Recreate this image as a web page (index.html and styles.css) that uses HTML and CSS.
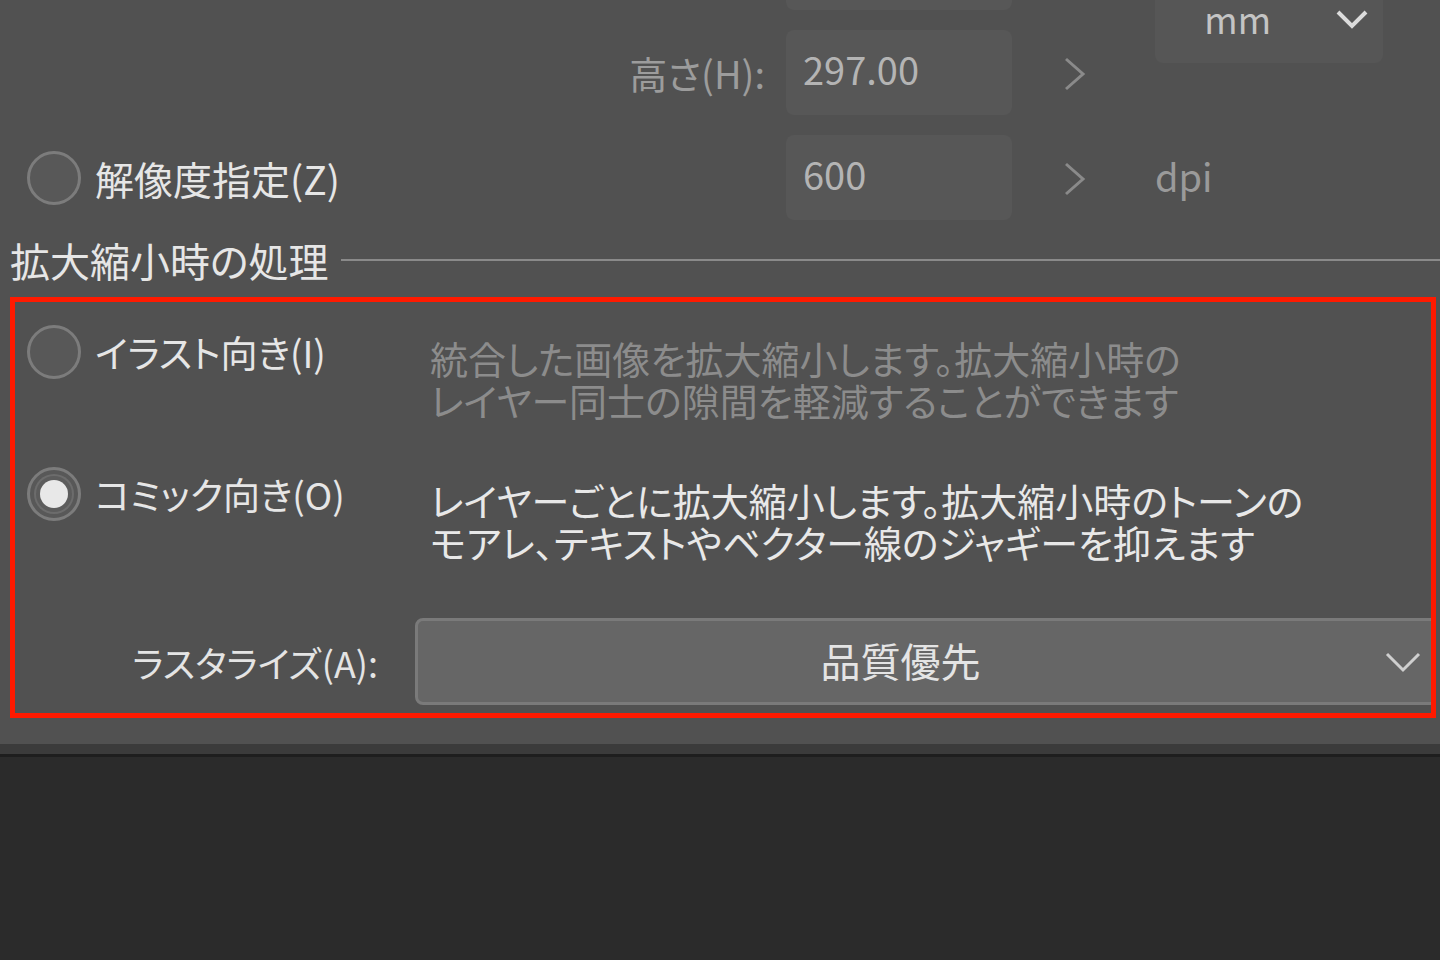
FILE: index.html
```html
<!DOCTYPE html>
<html lang="ja">
  <head>
    <meta charset="UTF-8" />
    <meta name="viewport" content="width=device-width, initial-scale=1.0" />
    <title>画像を統合して書き出し</title>
    <link rel="stylesheet" href="styles.css">
  </head>
  <body>
    <div class="dialog">
      <!-- サイズ指定 -->
      <div class="size-grid">
        <div class="label"></div>
        <div class="field"></div>
        <div class="step"></div>
        <div class="unit-select">
          <span>mm</span>
          <svg class="unit-chevron" width="34" height="22" viewBox="0 0 34 22">
            <polyline points="3,4 17,18 31,4" fill="none" stroke="#dcdcdc" stroke-width="4" />
          </svg>
        </div>

        <div class="label">高さ(H):</div>
        <div class="field">297.00</div>
        <div class="step">
          <svg width="24" height="34" viewBox="0 0 24 34">
            <polyline points="3,2 20,17 3,32" fill="none" stroke="#8a8a8a" stroke-width="3" />
          </svg>
        </div>

        <div class="radio-label">
          <span class="radio"></span>
          <span>解像度指定(Z)</span>
        </div>
        <div class="field">600</div>
        <div class="step">
          <svg width="24" height="34" viewBox="0 0 24 34">
            <polyline points="3,2 20,17 3,32" fill="none" stroke="#8a8a8a" stroke-width="3" />
          </svg>
        </div>
        <div class="unit-text">dpi</div>
      </div>

      <!-- 拡大縮小時の処理 -->
      <div class="section-head">
        <span>拡大縮小時の処理</span>
        <div class="section-line"></div>
      </div>

      <div class="highlight">
        <div class="option">
          <div class="radio-label">
            <span class="radio"></span>
            <span>イラスト向き(I)</span>
          </div>
          <p class="desc disabled">統合した画像を拡大縮小します。拡大縮小時の<br>レイヤー同士の隙間を軽減することができます</p>
        </div>
        <div class="option">
          <div class="radio-label">
            <span class="radio checked"></span>
            <span>コミック向き(O)</span>
          </div>
          <p class="desc">レイヤーごとに拡大縮小します。拡大縮小時のトーンの<br>モアレ、テキストやベクター線のジャギーを抑えます</p>
        </div>
        <div class="raster-row">
          <div class="raster-label">ラスタライズ(A):</div>
          <div class="select">
            <span class="select-text">品質優先</span>
            <span class="select-arrow">
              <svg width="36" height="22" viewBox="0 0 36 22">
                <polyline points="2,3 18,19 34,3" fill="none" stroke="#cfcfcf" stroke-width="3" />
              </svg>
            </span>
          </div>
        </div>
      </div>
    </div>
    <div class="dialog-edge"></div>
  </body>
</html>
```

FILE: styles.css
```css
body {
  margin: 0;
  background-color: #2b2b2b;
  font-family: "Noto Sans CJK JP", "Noto Sans", sans-serif;
  font-feature-settings: "palt";
  color: #e4e4e4;
  overflow: hidden;
}
.dialog {
  background-color: #515151;
  height: 744px;
  overflow: hidden;
}
.dialog-edge {
  height: 10px;
  background-color: #3b3b3b;
  border-bottom: 3px solid #1e1e1e;
}
.size-grid {
  display: grid;
  grid-template-columns: 786px 226px 143px 228px 1fr;
  grid-template-rows: 85px 85px 85px;
  row-gap: 20px;
  margin-top: -75px;
  align-items: center;
}
.size-grid .label,
.size-grid .radio-label {
  grid-column: 1;
}
.size-grid .field {
  grid-column: 2;
}
.size-grid .step {
  grid-column: 3;
}
.size-grid .unit-text {
  grid-column: 4;
}
.label {
  justify-self: end;
  padding-right: 21px;
  font-size: 38px;
  color: #9c9c9c;
}
.field {
  height: 85px;
  background-color: #575757;
  border-radius: 8px;
  box-sizing: border-box;
  padding-left: 17px;
  display: flex;
  align-items: center;
  font-size: 38px;
  color: #b4b4b4;
  padding-bottom: 8px;
}
.step {
  padding-left: 51px;
  display: flex;
  align-items: center;
  padding-top: 2px;
}
.unit-select {
  grid-row: 1 / 3;
  grid-column: 4;
  height: 85px;
  background-color: #565656;
  border-radius: 8px;
  display: flex;
  align-items: center;
  justify-content: flex-end;
  font-size: 36px;
  color: #c4c4c4;
}
.unit-select span {
  margin-right: 64px;
  margin-top: -4px;
}
.unit-chevron {
  margin-right: 14px;
  margin-top: -2px;
}
.unit-text {
  font-size: 38px;
  color: #9a9a9a;
  padding-bottom: 4px;
}
.radio-label {
  display: flex;
  align-items: center;
  gap: 14px;
  padding-left: 27px;
  font-size: 37px;
  color: #e6e6e6;
  height: 54px;
  white-space: nowrap;
}
.size-grid .radio-label {
  font-size: 39px;
}
.radio {
  width: 54px;
  height: 54px;
  box-sizing: border-box;
  border: 3px solid #7c7c7c;
  border-radius: 50%;
  background-color: #585858;
  display: flex;
  align-items: center;
  justify-content: center;
  flex-shrink: 0;
}
.radio.checked::after {
  content: "";
  width: 28px;
  height: 28px;
  border-radius: 50%;
  background-color: #e8e8e8;
  box-shadow: 0 0 0 4px #5c5c5c, 0 0 0 6px #6c6c6c;
}
.section-head {
  display: flex;
  align-items: center;
  height: 44px;
  margin-top: 18px;
  padding-left: 10px;
  font-size: 40px;
  color: #e6e6e6;
}
.section-line {
  flex: 1;
  height: 2px;
  margin-left: 12px;
  background-color: #8a8a8a;
}
.highlight {
  margin: 15px 4px 0 10px;
  border: 5px solid #ff1a00;
  padding: 23px 0 8px 0;
  overflow: hidden;
}
.option {
  display: grid;
  grid-template-columns: 415px 1fr;
  height: 142px;
}
.option .radio-label {
  padding-left: 12px;
}
.desc {
  margin: 12px 0 0 0;
  font-size: 38px;
  line-height: 42px;
  color: #e8e8e8;
  white-space: nowrap;
}
.desc.disabled {
  color: #8c8c8c;
}
.raster-row {
  display: flex;
  align-items: center;
  margin-top: 9px;
  margin-right: -12px;
}
.raster-label {
  width: 363px;
  padding-right: 37px;
  text-align: right;
  font-size: 36px;
  color: #e4e4e4;
  white-space: nowrap;
}
.select {
  flex: 1;
  height: 87px;
  box-sizing: border-box;
  background-color: #666666;
  border: 3px solid #7a7a7a;
  border-radius: 8px;
  display: flex;
  align-items: center;
}
.select-text {
  flex: 1;
  text-align: center;
  font-size: 40px;
  color: #e4e4e4;
  padding-bottom: 4px;
}
.select-arrow {
  width: 55px;
  display: flex;
  align-items: center;
  padding-left: 2px;
}
```
